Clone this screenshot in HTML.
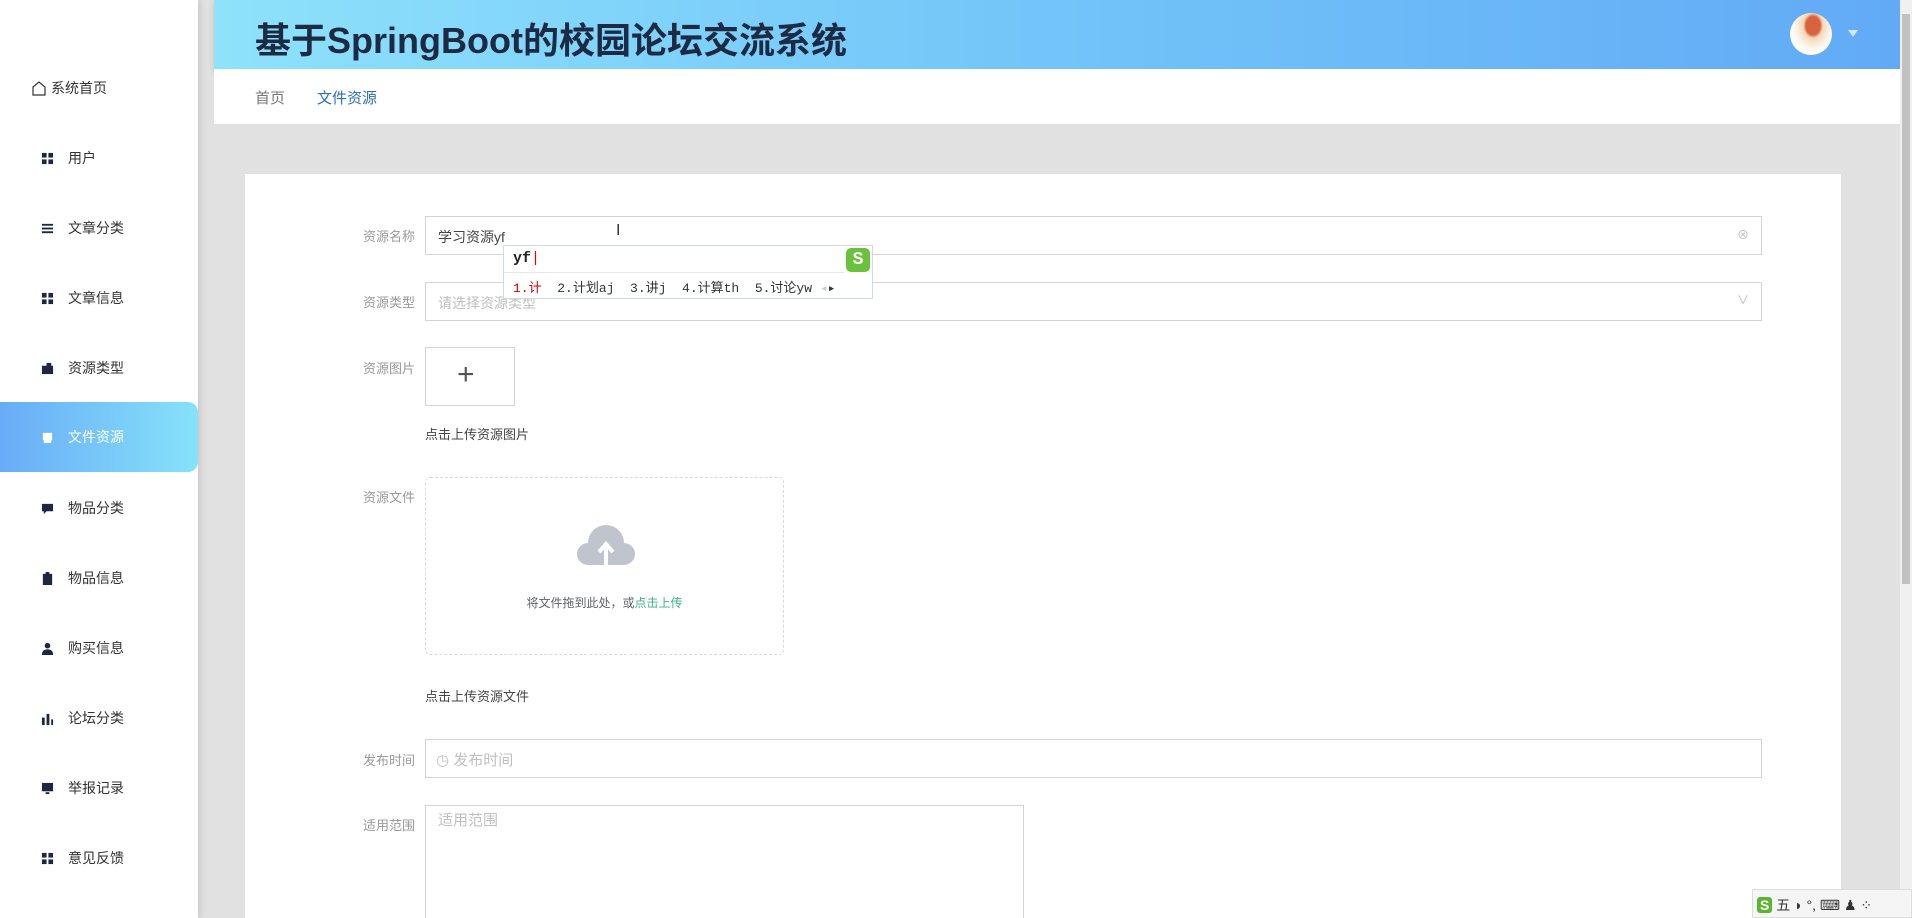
<!DOCTYPE html>
<html style="overflow:hidden;height:918px"><head><meta charset="utf-8"><style>
*{margin:0;padding:0;box-sizing:border-box}
body{width:1912px;height:918px;overflow:hidden;background:#e1e1e1;font-family:"Liberation Sans","Noto Sans CJK SC",sans-serif;position:relative;color:#333}
.abs{position:absolute}
#side{left:0;top:0;width:198px;height:918px;background:#fff;box-shadow:2px 0 6px rgba(0,0,0,.12)}
.it{position:absolute;left:0;width:198px;height:70px;display:flex;align-items:center;font-size:14px;color:#333}
.it .ic{position:absolute;left:41px;width:13px;height:13px}
.it span{position:absolute;left:68px}
.act{background:linear-gradient(90deg,#68abf7,#86e2f9);border-radius:0 10px 10px 0;color:#fff}
#hdr{left:214px;top:0;width:1686px;height:69px;background:linear-gradient(90deg,#8ee2fa,#72c4f9 50%,#62aaf6);box-shadow:0 2px 6px rgba(0,0,0,.15)}
#hdr h1{position:absolute;left:41px;top:12px;font-size:36px;font-weight:bold;color:#1d2a44}
#bc{left:214px;top:69px;width:1686px;height:55px;background:#fff;font-size:15px}
#card{left:245px;top:174px;width:1596px;height:744px;background:#fff}
.lb{position:absolute;width:90px;left:325px;text-align:right;font-size:13px;color:#999}
.inp{position:absolute;left:425px;border:1px solid #d4d4d4;background:#fff;font-size:15px}
.note{position:absolute;left:425px;font-size:13px;color:#444}
</style></head><body>
<div id="side" class="abs">
 <div class="it" style="top:53px"><svg class="ic" style="left:31px;width:16px;height:16px" viewBox="0 0 16 16"><path d="M2 7L8 2l6 5v8H2z" fill="none" stroke="#333" stroke-width="1.2"/></svg><span style="left:51px;font-size:14px">系统首页</span></div>
 <div class="it" style="top:123px"><svg class="ic" viewBox="0 0 14 14" fill="#1e2640"><rect x="1" y="1" width="5" height="5"/><rect x="8" y="1" width="5" height="5"/><rect x="1" y="8" width="5" height="5"/><rect x="8" y="8" width="5" height="5"/></svg><span>用户</span></div>
 <div class="it" style="top:193px"><svg class="ic" viewBox="0 0 14 14" fill="#1e2640"><rect x="1" y="2" width="12" height="2"/><rect x="1" y="6" width="12" height="2"/><rect x="1" y="10" width="12" height="2"/></svg><span>文章分类</span></div>
 <div class="it" style="top:263px"><svg class="ic" viewBox="0 0 14 14" fill="#1e2640"><rect x="1" y="1" width="5" height="5"/><rect x="8" y="1" width="5" height="5"/><rect x="1" y="8" width="5" height="5"/><rect x="8" y="8" width="5" height="5"/></svg><span>文章信息</span></div>
 <div class="it" style="top:333px"><svg class="ic" viewBox="0 0 14 14" fill="#1e2640"><rect x="1" y="4" width="12" height="9"/><rect x="6" y="1" width="5" height="4"/></svg><span>资源类型</span></div>
 <div class="it act" style="top:402px"><svg class="ic" viewBox="0 0 14 14" fill="#fff"><rect x="2" y="2" width="10" height="8"/><rect x="3" y="10" width="8" height="3"/></svg><span>文件资源</span></div>
 <div class="it" style="top:473px"><svg class="ic" viewBox="0 0 14 14" fill="#1e2640"><path d="M1 2h12v8H6l-3 3v-3H1z"/></svg><span>物品分类</span></div>
 <div class="it" style="top:543px"><svg class="ic" viewBox="0 0 14 14" fill="#1e2640"><rect x="2" y="2" width="10" height="12"/><rect x="5" y="0" width="4" height="3"/></svg><span>物品信息</span></div>
 <div class="it" style="top:613px"><svg class="ic" viewBox="0 0 14 14" fill="#1e2640"><circle cx="7" cy="4" r="3"/><path d="M1 14c0-5 3-6 6-6s6 1 6 6z"/></svg><span>购买信息</span></div>
 <div class="it" style="top:683px"><svg class="ic" viewBox="0 0 14 14" fill="#1e2640"><rect x="1" y="6" width="3" height="8"/><rect x="6" y="2" width="3" height="12"/><rect x="11" y="8" width="2" height="6"/></svg><span>论坛分类</span></div>
 <div class="it" style="top:753px"><svg class="ic" viewBox="0 0 14 14" fill="#1e2640"><rect x="1" y="1" width="12" height="9"/><rect x="5" y="11" width="4" height="2"/></svg><span>举报记录</span></div>
 <div class="it" style="top:823px"><svg class="ic" viewBox="0 0 14 14" fill="#1e2640"><rect x="1" y="1" width="5" height="5"/><rect x="8" y="1" width="5" height="5"/><rect x="1" y="8" width="5" height="5"/><rect x="8" y="8" width="5" height="5"/></svg><span>意见反馈</span></div>
</div>
<div id="hdr" class="abs"><h1>基于SpringBoot的校园论坛交流系统</h1>
 <div class="abs" style="left:1576px;top:13px;width:42px;height:42px;border-radius:50%;background:radial-gradient(ellipse at 55% 30%,#d8643f 0 22%,#f3d9b8 30%,#fbf6ee 55%,#fff 70%)"></div>
 <div class="abs" style="left:1634px;top:30px;width:0;height:0;border-left:5px solid transparent;border-right:5px solid transparent;border-top:7px solid #cfe6fb"></div>
</div>
<div id="bc" class="abs"><span class="abs" style="left:41px;top:18px;color:#777">首页</span><span class="abs" style="left:103px;top:18px;color:#2e6fb5">文件资源</span></div>
<div class="abs" style="left:1900px;top:0;width:12px;height:918px;background:#f0f0f0"><div style="margin:14px 2px;width:8px;height:570px;background:#c1c1c1"></div></div>
<div id="card" class="abs"></div>
<div class="lb" style="top:226px">资源名称</div>
<div class="inp" style="top:216px;width:1337px;height:39px"><span class="abs" style="left:12px;top:10px;color:#444;font-size:14px">学习资源yf</span><span class="abs" style="right:12px;top:9px;color:#bbb;font-size:12px">⊗</span></div>
<div class="abs" style="left:616px;top:222px;font-size:16px">I</div>
<div class="lb" style="top:292px">资源类型</div>
<div class="inp" style="top:282px;width:1337px;height:39px"><span class="abs" style="left:12px;top:10px;color:#c0c0c0;font-size:14px">请选择资源类型</span><span class="abs" style="right:12px;top:8px;color:#bbb;font-size:12px">∨</span></div>
<div class="lb" style="top:358px">资源图片</div>
<div class="inp" style="top:347px;width:90px;height:59px"><span class="abs" style="left:31px;top:10px;font-size:30px;font-weight:200;color:#555">+</span></div>
<div class="note" style="top:424px">点击上传资源图片</div>
<div class="lb" style="top:487px">资源文件</div>
<div class="abs" style="left:425px;top:477px;width:359px;height:178px;border:1px dashed #d9d9d9;border-radius:5px">
 <svg class="abs" style="left:150px;top:43px" width="60" height="45" viewBox="0 0 60 45"><path d="M12 44a11 11 0 0 1 0-22a18 18 0 0 1 36 0a11 11 0 0 1 0 22z" fill="#c0c4cc"/><path d="M30 44V24m-7 7l7-8 7 8" stroke="#fff" stroke-width="4" fill="none"/></svg>
 <div class="abs" style="left:0;width:357px;top:116px;text-align:center;font-size:12px;color:#606266">将文件拖到此处，或<span style="color:#3bb38b">点击上传</span></div>
</div>
<div class="note" style="top:686px">点击上传资源文件</div>
<div class="lb" style="top:750px">发布时间</div>
<div class="inp" style="top:739px;width:1337px;height:39px"><span class="abs" style="left:10px;top:9px;color:#c0c0c0;font-size:15px">◷ 发布时间</span></div>
<div class="lb" style="top:815px">适用范围</div>
<div class="inp" style="top:805px;width:599px;height:113px;border-bottom:none"><span class="abs" style="left:12px;top:3px;color:#c0c0c0;font-size:15px">适用范围</span></div>
<div class="abs" style="left:503px;top:245px;width:370px;height:54px;background:#fff;border:1px solid #cfd8e8;font-family:'Liberation Mono','Noto Sans CJK SC',monospace">
 <div class="abs" style="left:9px;top:4px;font-size:15px;font-weight:bold;color:#222">yf<span style="color:#e00;font-weight:normal">|</span></div>
 <div class="abs" style="left:0;top:26px;width:340px;border-top:1px solid #e6e6e6"></div>
 <div class="abs" style="left:9px;top:31px;font-size:13px;color:#333;white-space:nowrap"><span style="color:#c00">1.计</span>&nbsp; 2.计划aj&nbsp; 3.讲j&nbsp; 4.计算th&nbsp; 5.讨论yw&nbsp;<span style="color:#ccc">◂</span>▸</div>
 <div class="abs" style="left:342px;top:2px;width:24px;height:24px;background:#6ac13c;border-radius:5px;color:#fff;font-weight:bold;font-size:18px;text-align:center;line-height:24px">S</div>
</div>
<div class="abs" style="left:1752px;top:889px;width:160px;height:29px;background:#f5f5f5;border:1px solid #ddd;font-size:14px;padding:5px 4px;white-space:nowrap"><span style="background:#5cb531;color:#fff;font-weight:bold;padding:0 3px;border-radius:3px">S</span> 五 ◗ °, ⌨ ♟ ⁘</div>
</body></html>
